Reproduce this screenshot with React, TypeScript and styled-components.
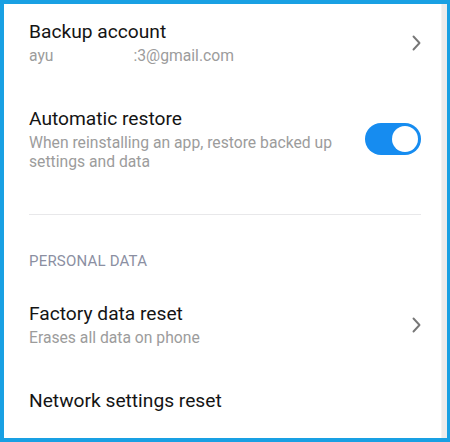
import React from "react";
import styled, { createGlobalStyle } from "styled-components";

const Global = createGlobalStyle`
  html, body { margin: 0; padding: 0; background: #ffffff; }
  body { font-family: Roboto, "Noto Sans", "Liberation Sans", sans-serif; -webkit-font-smoothing: antialiased; }
  * { box-sizing: border-box; }
`;

const Frame = styled.div`
  width: 450px;
  height: 442px;
  border-style: solid;
  border-color: #19a0e3;
  border-width: 4px 3px 4px 4px;
  display: flex;
  background: #fff;
  overflow: hidden;
`;

const Content = styled.div`
  flex: 1;
  padding: 0 20px 0 25px;
  display: flex;
  flex-direction: column;
`;

const ScrollTrack = styled.div`
  width: 6px;
  background: #ececec;
  border-left: 1px solid #f4f4f4;
`;

const Row = styled.div<{ $first?: boolean }>`
  display: flex;
  align-items: center;
  gap: 16px;
  padding: ${(p) => (p.$first ? "16px" : "21px")} 0 21px;
`;

const Texts = styled.div`
  flex: 1;
  display: flex;
  flex-direction: column;
`;

const Title = styled.div`
  font-size: 19.2px;
  line-height: 24px;
  color: #141414;
`;

const Sub = styled.div`
  margin-top: 2px;
  font-size: 15.7px;
  line-height: 19px;
  color: #9c9c9c;
`;

const Redact = styled.span`
  display: inline-block;
  width: 80px;
`;

const Divider = styled.div`
  height: 1px;
  background: #e8e8ea;
  margin-top: 22px;
`;

const Header = styled.div`
  margin: 36px 0 10px;
  font-size: 15px;
  line-height: 20px;
  color: #8b8fa2;
  letter-spacing: 0.2px;
`;

const Switch = styled.div<{ $on: boolean }>`
  width: 56px;
  height: 32px;
  border-radius: 16px;
  background: ${(p) => (p.$on ? "#168cf0" : "#cfcfcf")};
  display: flex;
  align-items: center;
  justify-content: ${(p) => (p.$on ? "flex-end" : "flex-start")};
  padding: 0 3px;
  flex-shrink: 0;
`;

const Knob = styled.div`
  width: 26px;
  height: 26px;
  border-radius: 50%;
  background: #fff;
`;

const Chevron = () => (
  <svg width="9" height="16" viewBox="0 0 9 16" style={{ flexShrink: 0 }}>
    <path d="M1.5 1.5 L7.5 8 L1.5 14.5" fill="none" stroke="#777" strokeWidth="1.9" strokeLinecap="round" strokeLinejoin="round" />
  </svg>
);

export default function App() {
  return (
    <>
      <Global />
      <Frame>
        <Content>
          <Row $first>
            <Texts>
              <Title>Backup account</Title>
              <Sub>
                ayu<Redact />:3@gmail.com
              </Sub>
            </Texts>
            <Chevron />
          </Row>
          <Row>
            <Texts>
              <Title>Automatic restore</Title>
              <Sub>
                When reinstalling an app, restore backed up
                <br />
                settings and data
              </Sub>
            </Texts>
            <Switch $on>
              <Knob />
            </Switch>
          </Row>
          <Divider />
          <Header>PERSONAL DATA</Header>
          <Row>
            <Texts>
              <Title>Factory data reset</Title>
              <Sub>Erases all data on phone</Sub>
            </Texts>
            <Chevron />
          </Row>
          <Row>
            <Texts>
              <Title>Network settings reset</Title>
            </Texts>
          </Row>
        </Content>
        <ScrollTrack />
      </Frame>
    </>
  );
}
